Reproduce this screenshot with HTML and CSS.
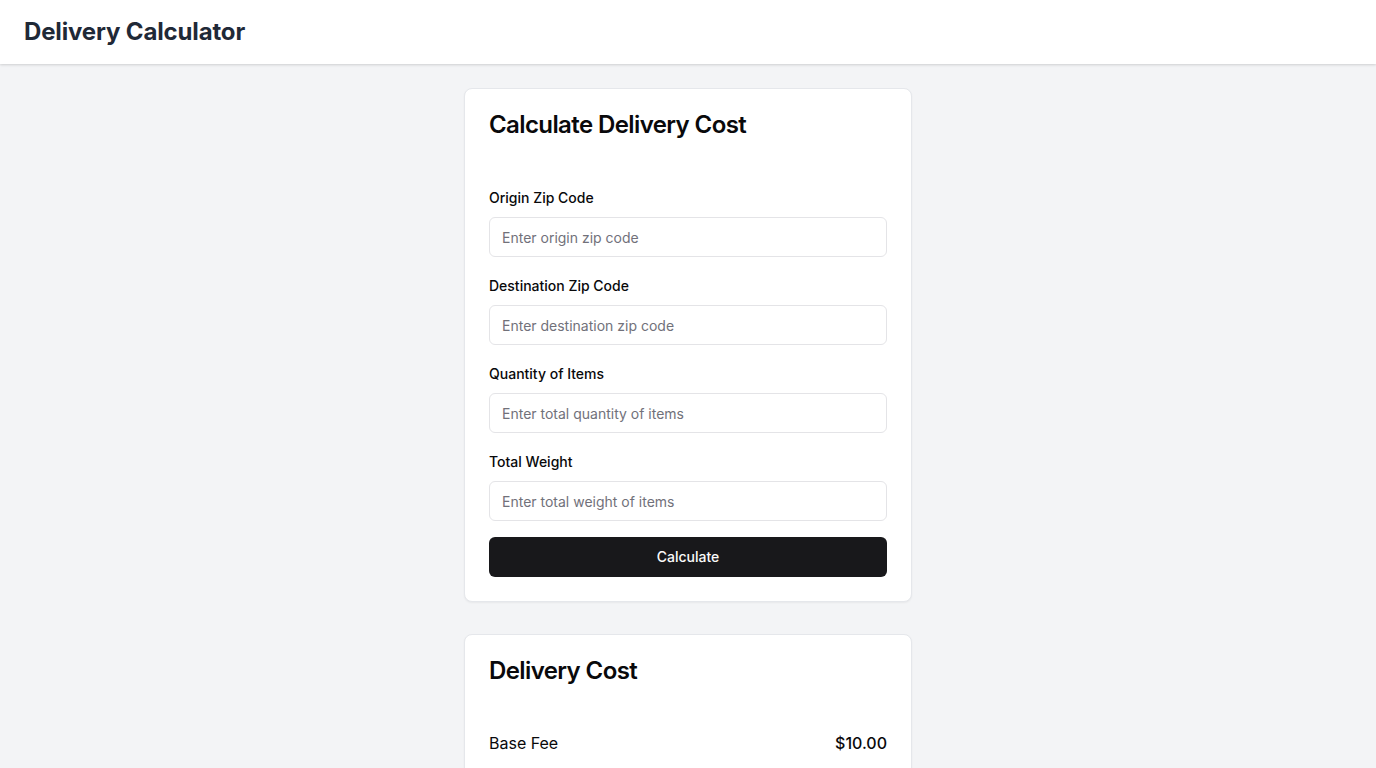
FILE: index.html
```html
<!DOCTYPE html>
<html lang="en">
<head>
<meta charset="utf-8">
<title>Delivery Calculator</title>
<link rel="stylesheet" href="styles.css">
</head>
<body>
<header class="topbar">
  <h1 class="brand">Delivery Calculator</h1>
</header>
<main class="page">
  <section class="card">
    <h2 class="card-title">Calculate Delivery Cost</h2>
    <form class="form">
      <div class="field">
        <label class="label" for="origin">Origin Zip Code</label>
        <input class="input" id="origin" type="text" placeholder="Enter origin zip code">
      </div>
      <div class="field">
        <label class="label" for="dest">Destination Zip Code</label>
        <input class="input" id="dest" type="text" placeholder="Enter destination zip code">
      </div>
      <div class="field">
        <label class="label" for="qty">Quantity of Items</label>
        <input class="input" id="qty" type="text" placeholder="Enter total quantity of items">
      </div>
      <div class="field">
        <label class="label" for="weight">Total Weight</label>
        <input class="input" id="weight" type="text" placeholder="Enter total weight of items">
      </div>
      <button class="btn" type="button">Calculate</button>
    </form>
  </section>
  <section class="card">
    <h2 class="card-title">Delivery Cost</h2>
    <div class="rows">
      <div class="row"><span>Base Fee</span><span class="amt">$10.00</span></div>
      <div class="row"><span>Distance Fee</span><span class="amt">$5.00</span></div>
      <div class="row"><span>Weight Fee</span><span class="amt">$2.00</span></div>
      <div class="row total"><span>Total</span><span class="amt">$17.00</span></div>
    </div>
  </section>
</main>
</body>
</html>
```
FILE: styles.css
```css
* { box-sizing: border-box; }
html, body { margin: 0; padding: 0; }
body {
  font-family: Inter, "Noto Sans", "Liberation Sans", sans-serif;
  background: #f3f4f6;
  color: #09090b;
}
.topbar {
  height: 64px;
  background: #ffffff;
  box-shadow: 0 1px 3px rgba(0,0,0,0.1), 0 1px 2px rgba(0,0,0,0.06);
  display: flex;
  align-items: center;
  padding: 0 24px;
}
.brand {
  margin: 0;
  font-size: 24px;
  font-weight: 700;
  line-height: 32px;
  letter-spacing: -0.15px;
  color: #1f2937;
}
.page {
  display: flex;
  flex-direction: column;
  align-items: center;
  gap: 32px;
  padding-top: 24px;
  padding-bottom: 24px;
}
.card {
  width: 448px;
  background: #ffffff;
  border: 1px solid #e5e7eb;
  border-radius: 8px;
  box-shadow: 0 1px 2px rgba(0,0,0,0.05);
  padding: 24px;
}
.card-title {
  margin: 0 0 48px 0;
  font-size: 24px;
  font-weight: 600;
  line-height: 24px;
  letter-spacing: -0.6px;
  color: #09090b;
}
.form {
  display: flex;
  flex-direction: column;
  gap: 16px;
}
.field {
  display: flex;
  flex-direction: column;
  gap: 7px;
}
.label {
  font-size: 14px;
  font-weight: 500;
  line-height: 25px;
  color: #09090b;
}
.input {
  height: 40px;
  width: 100%;
  border: 1px solid #e4e4e7;
  border-radius: 6px;
  padding: 0 12px;
  font-family: inherit;
  font-size: 14px;
  color: #09090b;
  background: #ffffff;
  outline: none;
}
.input::placeholder { color: #71717a; }
.btn {
  height: 40px;
  width: 100%;
  border: none;
  border-radius: 6px;
  background: #18181b;
  color: #fafafa;
  font-family: inherit;
  font-size: 14px;
  font-weight: 500;
  padding: 0 16px 2px;
}
.rows {
  display: flex;
  flex-direction: column;
  gap: 12px;
}
.row {
  display: flex;
  justify-content: space-between;
  font-size: 16px;
  line-height: 24px;
  color: #09090b;
}
.amt { font-weight: 500; }
.total { font-weight: 600; }
```
